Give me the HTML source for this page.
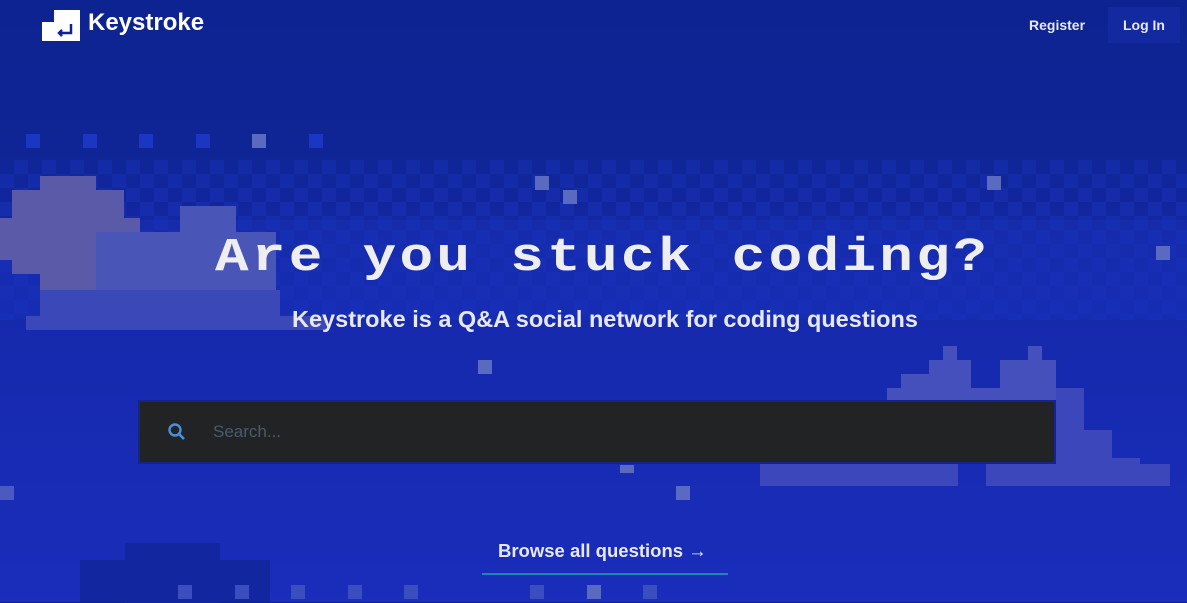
<!DOCTYPE html>
<html><head><meta charset="utf-8"><style>
*{margin:0;padding:0;box-sizing:border-box}
body{width:1187px;height:602px;overflow:hidden;position:relative;font-family:"Liberation Sans",sans-serif;
background:linear-gradient(#0e2392 0px,#0f2595 150px,#1529ac 300px,#1a2dbb 602px);}
.a{position:absolute}
.p{position:absolute;width:14px;height:14px}
</style></head><body>
<div class="a" style="left:0;top:160px;width:1187px;height:160px;background:
repeating-conic-gradient(#1a33c0 0 25%,transparent 0 50%) 0 0/28px 28px;opacity:.4"></div>
<div class="a" style="left:0;top:220px;width:1187px;height:100px;background:#1730b8;opacity:.5"></div>
<div class="p" style="left:26px;top:134px;background:#1a36c2"></div>
<div class="p" style="left:83px;top:134px;background:#1a36c2"></div>
<div class="p" style="left:139px;top:134px;background:#1a36c2"></div>
<div class="p" style="left:196px;top:134px;background:#1a36c2"></div>
<div class="p" style="left:252px;top:134px;background:#5a6ac0"></div>
<div class="p" style="left:309px;top:134px;background:#1a36c2"></div>
<div class="p" style="left:535px;top:176px;background:#5a6ac0"></div>
<div class="p" style="left:987px;top:176px;background:#5a6ac0"></div>
<div class="p" style="left:563px;top:190px;background:#5a6ac0"></div>
<div class="p" style="left:1156px;top:246px;background:#5a6ac0"></div>
<div class="p" style="left:478px;top:360px;background:#5a6ac0"></div>
<div class="p" style="left:620px;top:465px;background:#5a6ac0;height:8px"></div>
<div class="p" style="left:676px;top:486px;background:#5a6ac0"></div>
<div class="p" style="left:0;top:486px;background:#4a5ac0"></div>
<div class="a" style="left:40px;top:176px;width:56px;height:126px;background:#5a5aa8"></div>
<div class="a" style="left:12px;top:190px;width:112px;height:84px;background:#5a5aa8"></div>
<div class="a" style="left:0;top:218px;width:140px;height:42px;background:#5a5aa8"></div>
<div class="a" style="left:180px;top:206px;width:56px;height:56px;background:#4a55b8"></div>
<div class="a" style="left:96px;top:232px;width:180px;height:70px;background:#4a55b8"></div>
<div class="a" style="left:40px;top:290px;width:240px;height:40px;background:#3a48b8"></div>
<div class="a" style="left:26px;top:316px;width:300px;height:14px;background:#3a48b8"></div>
<div class="a" style="left:943px;top:346px;width:14px;height:14px;background:#4550bd"></div>
<div class="a" style="left:929px;top:360px;width:42px;height:54px;background:#4550bd"></div>
<div class="a" style="left:901px;top:374px;width:70px;height:40px;background:#4550bd"></div>
<div class="a" style="left:887px;top:388px;width:180px;height:26px;background:#4550bd"></div>
<div class="a" style="left:1028px;top:346px;width:14px;height:100px;background:#4550bd"></div>
<div class="a" style="left:1000px;top:360px;width:56px;height:80px;background:#4550bd"></div>
<div class="a" style="left:1056px;top:388px;width:28px;height:80px;background:#3c47bc"></div>
<div class="a" style="left:1084px;top:430px;width:28px;height:40px;background:#3c47bc"></div>
<div class="a" style="left:1112px;top:458px;width:28px;height:14px;background:#3c47bc"></div>
<div class="a" style="left:760px;top:464px;width:198px;height:22px;background:#3c47bc"></div>
<div class="a" style="left:986px;top:464px;width:184px;height:22px;background:#3c47bc"></div>
<div class="a" style="left:125px;top:543px;width:95px;height:60px;background:#12279f"></div>
<div class="a" style="left:80px;top:560px;width:190px;height:42px;background:#12279f"></div>
<div class="p" style="left:178px;top:585px;background:#3a4ec0"></div>
<div class="p" style="left:235px;top:585px;background:#3a4ec0"></div>
<div class="p" style="left:291px;top:585px;background:#3a4ec0"></div>
<div class="p" style="left:348px;top:585px;background:#3a4ec0"></div>
<div class="p" style="left:404px;top:585px;background:#3a4ec0"></div>
<div class="p" style="left:530px;top:585px;background:#3a4ec0"></div>
<div class="p" style="left:587px;top:585px;background:#5a6ac0"></div>
<div class="p" style="left:643px;top:585px;background:#3a4ec0"></div>
<svg class="a" style="left:42px;top:10px" width="38" height="31" viewBox="0 0 38 31"><path d="M12 0H38V31H0V12H12Z" fill="#fff"/><path d="M29 14V23H17M20 20L17 23L20 26" stroke="#0e2392" stroke-width="2.5" fill="none"/></svg>
<div class="a" style="left:88px;top:9px;color:#fff;font-weight:bold;font-size:24px">Keystroke</div>
<div class="a" style="left:1029px;top:17px;color:#e8e8f4;font-weight:bold;font-size:14px">Register</div>
<div class="a" style="left:1108px;top:7px;width:72px;height:36px;background:#1229a0;color:#e8e8f4;font-weight:bold;font-size:14px;text-align:center;line-height:36px">Log In</div>
<div class="a" style="left:215px;top:230px;width:800px;white-space:nowrap;color:#eeeef0;font-family:'Liberation Mono',monospace;font-weight:bold;font-size:56px;letter-spacing:3.3px;transform:scaleY(0.85);transform-origin:top left">Are you stuck coding?</div>
<div class="a" style="left:0;top:306px;width:1210px;text-align:center;color:#e8e8f4;font-weight:bold;font-size:23.5px">Keystroke is a Q&amp;A social network for coding questions</div>
<div class="a" style="left:138px;top:400px;width:918px;height:64px;background:#222324;border:2px solid #17238a"></div>
<svg class="a" style="left:167px;top:422px" width="20" height="20" viewBox="0 0 20 20"><circle cx="8" cy="8" r="5.5" stroke="#4a90d8" stroke-width="2.4" fill="none"/><path d="M12 12L17 17" stroke="#4a90d8" stroke-width="2.6"/></svg>
<div class="a" style="left:213px;top:422px;color:#4a5a70;font-size:17px">Search...</div>
<div class="a" style="left:498px;top:540px;color:#e8e8f4;font-weight:bold;font-size:18.5px">Browse all questions →</div>
<div class="a" style="left:482px;top:573px;width:246px;height:2px;background:#1a8aa8"></div>
</body></html>
